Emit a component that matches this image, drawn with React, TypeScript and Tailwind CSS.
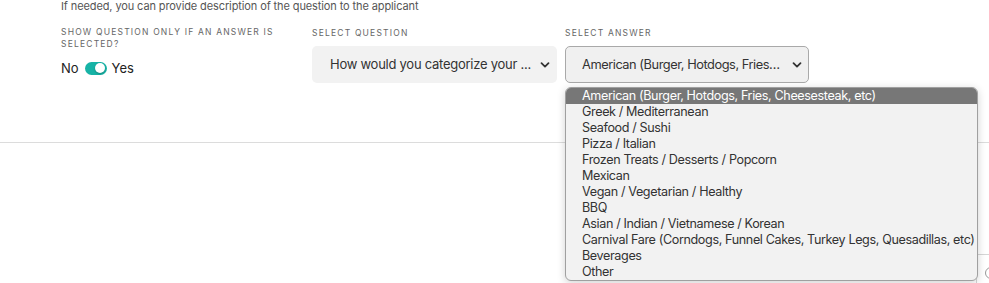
import React from "react";

const options = [
  "American (Burger, Hotdogs, Fries, Cheesesteak, etc)",
  "Greek / Mediterranean",
  "Seafood / Sushi",
  "Pizza / Italian",
  "Frozen Treats / Desserts / Popcorn",
  "Mexican",
  "Vegan / Vegetarian / Healthy",
  "BBQ",
  "Asian / Indian / Vietnamese / Korean",
  "Carnival Fare (Corndogs, Funnel Cakes, Turkey Legs, Quesadillas, etc)",
  "Beverages",
  "Other",
];

function Chevron() {
  return (
    <svg width="10" height="10" viewBox="0 0 10 10" className="shrink-0">
      <path d="M1.5 3.2 L5 6.6 L8.5 3.2" fill="none" stroke="#333" strokeWidth="1.8" strokeLinecap="round" strokeLinejoin="round" />
    </svg>
  );
}

export default function App() {
  return (
    <div
      className="relative w-[989px] h-[283px] overflow-hidden bg-white text-[#333]"
      style={{ fontFamily: "Inter, 'Noto Sans', sans-serif" }}
    >
      <div className="pl-[61px]">
        <div className="-mt-[1px] h-[14px] text-[11px] leading-[14px] text-[#555] tracking-[-0.01em] whitespace-nowrap">
          If needed, you can provide description of the question to the applicant
        </div>
        <div className="flex mt-[11px]">
          <div className="w-[251px] pr-[18px]">
            <div className="mt-[2px] text-[8.5px] leading-[12px] tracking-[0.14em] uppercase text-[#666]">
              Show question only if an answer is selected?
            </div>
            <div className="flex items-center mt-[10px] text-[13px] leading-[16px] text-[#222]">
              <span>No</span>
              <span className="ml-[6px] mr-[5px] relative inline-flex items-center w-[22px] h-[13px] rounded-full bg-[#17b3a6]">
                <span className="absolute right-[1.5px] w-[10px] h-[10px] rounded-full bg-white shadow-[0_1px_2px_rgba(0,0,0,0.25)]" />
              </span>
              <span>Yes</span>
            </div>
          </div>
          <div className="w-[245px] mr-[8px]">
            <div className="text-[8.5px] leading-[11px] tracking-[0.14em] uppercase text-[#666] mt-[4px]">
              Select question
            </div>
            <div className="mt-[7px] h-[37px] rounded-[5px] bg-[#f2f2f2] flex items-center pl-[18px] pr-[7px] text-[13px] tracking-[-0.02em] text-[#333]">
              <span className="flex-1 whitespace-nowrap overflow-hidden">How would you categorize your ...</span>
              <Chevron />
            </div>
          </div>
          <div className="w-[244px]">
            <div className="text-[8.5px] leading-[11px] tracking-[0.14em] uppercase text-[#666] mt-[4px]">
              Select answer
            </div>
            <div className="mt-[7px] h-[37px] rounded-[5px] bg-[#f0f0f0] border border-[#a9a9a9] flex items-center pl-[16px] pr-[6px] text-[12.8px] tracking-[-0.035em] text-[#333]">
              <span className="flex-1 whitespace-nowrap overflow-hidden">American (Burger, Hotdogs, Fries…</span>
              <Chevron />
            </div>
          </div>
        </div>
      </div>

      <div className="mt-[59px] border-t border-[#dcdcdc]" />

      <div className="absolute left-[976px] top-[254px] w-[40px] h-[40px] border-t border-l border-[#d6d6d6] bg-white">
        <div className="absolute left-[8px] top-[12px] w-[12px] h-[12px] rounded-full border-[1.5px] border-[#999]" />
      </div>

      <div className="absolute left-[565px] top-[87px] w-[413px] rounded-[6px] border border-[#a0a0a0] bg-[#f2f2f2] shadow-[0_2px_8px_rgba(0,0,0,0.18)] overflow-hidden">
        {options.map((o, i) => (
          <div
            key={o}
            className={
              i === 0
                ? "h-[16px] leading-[16px] pl-[16px] text-[12.6px] tracking-[-0.03em] bg-[#777777] text-white whitespace-nowrap"
                : "h-[16px] leading-[16px] pl-[16px] text-[12.6px] tracking-[-0.03em] text-[#333] whitespace-nowrap"
            }
          >
            {o}
          </div>
        ))}
      </div>
    </div>
  );
}
